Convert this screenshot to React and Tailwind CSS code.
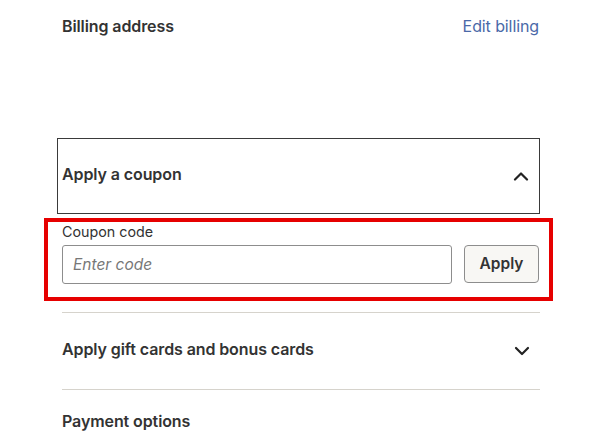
import React from "react";

const Chevron = ({ up }) => (
  <svg width="16" height="10" viewBox="0 0 16 10" fill="none">
    <polyline
      points={up ? "2,8.5 8,2.5 14,8.5" : "2,2 8,8 14,2"}
      stroke="#222"
      strokeWidth="2.2"
      strokeLinecap="round"
      strokeLinejoin="round"
    />
  </svg>
);

export default function App() {
  return (
    <div
      className="w-[609px] h-[445px] bg-white overflow-hidden text-[#222]"
      style={{ fontFamily: "Inter, 'Noto Sans', sans-serif" }}
    >
      <div className="ml-[62px] w-[478px]">
        <div className="flex items-center justify-between h-[26px] mt-[13px]">
          <span className="text-[16px] font-semibold tracking-[-0.1px] text-[#333]">Billing address</span>
          <span className="text-[16px] text-[#4a69a8] tracking-[-0.1px] pr-[1px]">Edit billing</span>
        </div>

        <div className="h-[99px]" />

        <div className="-ml-[5px] w-[483px] h-[76px] border border-[#3a3a3a] flex items-center justify-between pl-[4px] pr-[10px]">
          <span className="text-[16px] font-semibold tracking-[-0.1px] text-[#333] -mt-[4px]">Apply a coupon</span>
          <Chevron up />
        </div>

        <div className="-ml-[18px] w-[509px] h-[83px] mt-[4px] border-4 border-[#e60000] pl-[14px] pr-[10px] pt-[1px]">
          <div className="text-[14.3px] text-[#333] leading-[17px] h-[22px]">Coupon code</div>
          <div className="flex items-start">
            <input
              className="w-[390px] h-[39px] border border-[#8d8d8d] rounded-[3px] px-[10px] text-[15.5px] italic placeholder:text-[#777] outline-none"
              placeholder="Enter code"
            />
            <button className="ml-[12px] w-[75px] h-[38px] border border-[#8d8d8d] rounded-[4px] bg-[#f8f7f4] text-[15.5px] font-semibold text-[#333]">
              Apply
            </button>
          </div>
        </div>

        <div className="mt-[11px] border-t border-[#d6d3cc] h-[77px] flex items-center justify-between pr-[10px]">
          <span className="text-[16px] font-semibold tracking-[-0.1px] text-[#333] -mt-[5px]">Apply gift cards and bonus cards</span>
          <Chevron />
        </div>

        <div className="border-t border-[#d6d3cc] pt-[19px]">
          <span className="text-[16px] font-semibold tracking-[-0.1px] text-[#333]">Payment options</span>
        </div>
      </div>
    </div>
  );
}
